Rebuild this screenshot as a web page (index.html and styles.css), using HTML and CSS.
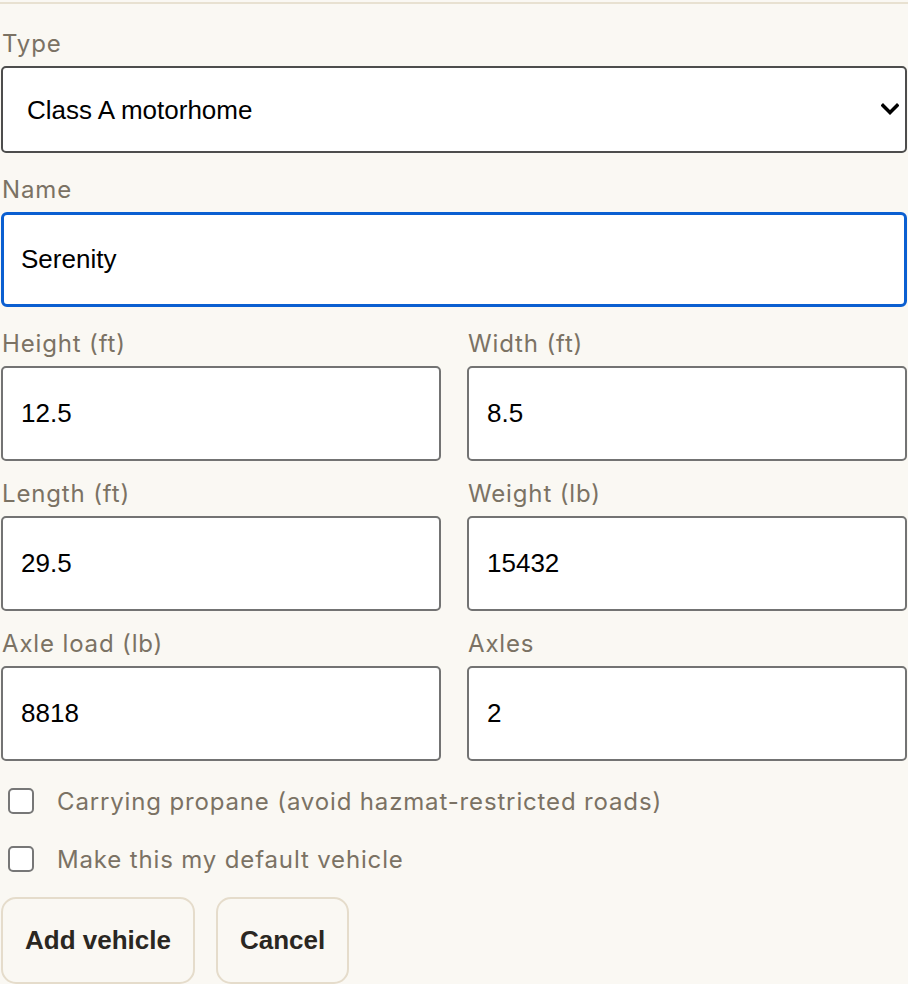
FILE: index.html
```html
<!doctype html>
<html lang="en">
<head>
    <meta charset="UTF-8">
    <title>Add vehicle</title>
<link rel="stylesheet" href="styles.css">
</head>
<body>
<div class="topline"></div>

<form class="vehicle-form">
<div class="field">
<label for="type">Type</label>
<div class="select-wrap">
<select id="type" class="select">
<option>Class A motorhome</option>
<option>Class B camper van</option>
<option>Class C motorhome</option>
<option>Travel trailer</option>
<option>Fifth wheel</option>
</select>
<svg class="chevron" width="18" height="12" viewBox="0 0 18 12"><path d="M2 2.5 L9 9.5 L16 2.5" fill="none" stroke="#000" stroke-width="3.4" stroke-linecap="square"/></svg>
</div>
</div>

<div class="field">
<label for="name">Name</label>
<input type="text" id="name" class="input focused" value="Serenity">
</div>

<div class="grid">
<div class="field">
<label for="height">Height (ft)</label>
<input type="text" id="height" class="input" value="12.5">
</div>
<div class="field">
<label for="width">Width (ft)</label>
<input type="text" id="width" class="input" value="8.5">
</div>
<div class="field">
<label for="length">Length (ft)</label>
<input type="text" id="length" class="input" value="29.5">
</div>
<div class="field">
<label for="weight">Weight (lb)</label>
<input type="text" id="weight" class="input" value="15432">
</div>
<div class="field">
<label for="axleload">Axle load (lb)</label>
<input type="text" id="axleload" class="input" value="8818">
</div>
<div class="field">
<label for="axles">Axles</label>
<input type="text" id="axles" class="input" value="2">
</div>
</div>

<div class="checks">
<label class="check"><input type="checkbox"> Carrying propane (avoid hazmat-restricted roads)</label>
<label class="check"><input type="checkbox"> Make this my default vehicle</label>
</div>

<div class="buttons">
<button type="submit" class="btn">Add vehicle</button>
<button type="button" class="btn">Cancel</button>
</div>
</form>
</body>
</html>
```

FILE: styles.css
```css
body {
    margin: 0;
    background-color: #faf8f3;
    font-family: Inter, "Noto Sans", "Liberation Sans", sans-serif;
    color: #7b7264;
}
.topline {
    height: 2px;
    margin-top: 2px;
    background-color: #e8e1d1;
}
.vehicle-form {
    padding: 0 1px;
    margin-top: 25px;
}
.field {
    display: flex;
    flex-direction: column;
    margin-bottom: 22px;
}
.field label {
    font-size: 24px;
    letter-spacing: 0.85px;
    line-height: 30px;
    margin-bottom: 7px;
    padding-left: 1px;
}
.select-wrap {
    position: relative;
}
.select {
    appearance: none;
    -webkit-appearance: none;
    width: 100%;
    height: 87px;
    box-sizing: border-box;
    border: 2px solid #4d4d4d;
    border-radius: 5px;
    background: #fff;
    padding: 0 24px;
    font-family: "Liberation Sans", Arial, sans-serif;
    font-size: 26px;
    color: #000;
    outline: none;
}
.chevron {
    position: absolute;
    right: 8px;
    top: 37px;
}
.input {
    width: 100%;
    height: 95px;
    box-sizing: border-box;
    border: 2px solid #737373;
    border-radius: 5px;
    background: #fff;
    padding: 0 18px;
    font-family: "Liberation Sans", Arial, sans-serif;
    font-size: 26px;
    color: #000;
    outline: none;
}
.input.focused {
    border: 3px solid #0b5fd1;
    border-radius: 6px;
    padding: 0 17px;
}
.grid {
    display: grid;
    grid-template-columns: 1fr 1fr;
    column-gap: 26px;
}
.grid .field {
    margin-bottom: 18px;
}
.checks {
    display: flex;
    flex-direction: column;
    gap: 22px;
    margin-top: 4px;
}
.check {
    display: flex;
    align-items: center;
    gap: 23px;
    height: 36px;
    font-size: 24px;
    letter-spacing: 0.85px;
    padding-left: 7px;
}
.check input {
    appearance: none;
    -webkit-appearance: none;
    width: 26px;
    height: 26px;
    margin: 0;
    border: 2px solid #777;
    border-radius: 5px;
    background: #fff;
}
.buttons {
    display: flex;
    gap: 21px;
    margin-top: 20px;
}
.btn {
    height: 87px;
    padding: 0 22px;
    background: transparent;
    border: 2px solid #e5dccb;
    border-radius: 15px;
    font-family: "Liberation Sans", Arial, sans-serif;
    font-weight: bold;
    font-size: 26px;
    color: #2a2722;
}
```
